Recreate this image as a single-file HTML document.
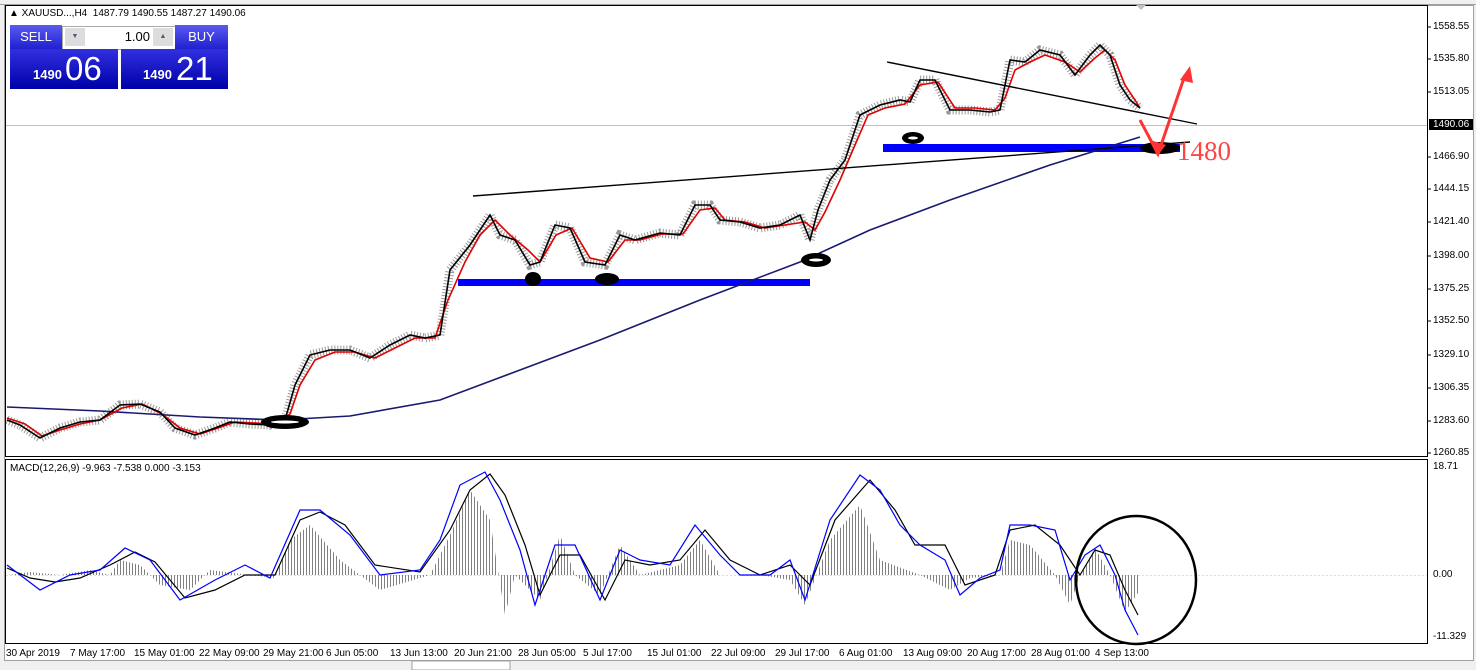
<!DOCTYPE html>
<html><head><meta charset="utf-8"><style>
body{margin:0;width:1476px;height:670px;overflow:hidden;background:#f0f0f0;font-family:"Liberation Sans",sans-serif}
.ax{position:absolute;left:1433px;font-size:10px;color:#000}
.bt{position:absolute;top:648px;font-size:10px;color:#000;white-space:nowrap}
</style></head><body>
<div style="position:absolute;left:0;top:0;width:1476px;height:4px;background:#f0f0f0;border-bottom:1px solid #a0a0a0"></div>
<div style="position:absolute;left:4px;top:5px;width:1468px;height:654px;background:#fff;border:1px solid #a0a0a0"></div>
<svg width="1476" height="670" style="position:absolute;left:0;top:0">
<defs><pattern id="hp" width="3" height="10" patternUnits="userSpaceOnUse"><rect x="0" y="0" width="1" height="10" fill="#808080"/></pattern></defs>
<rect x="5.5" y="5.5" width="1422" height="451" fill="none" stroke="#000"/>
<rect x="5.5" y="459.5" width="1422" height="184" fill="none" stroke="#000"/>
<line x1="6" y1="125.5" x2="1427" y2="125.5" stroke="#c0c0c0"/>
<g stroke="#000">
<line x1="1427" y1="27" x2="1431" y2="27"/><line x1="1427" y1="59" x2="1431" y2="59"/><line x1="1427" y1="92" x2="1431" y2="92"/><line x1="1427" y1="157" x2="1431" y2="157"/><line x1="1427" y1="189" x2="1431" y2="189"/><line x1="1427" y1="222" x2="1431" y2="222"/><line x1="1427" y1="256" x2="1431" y2="256"/><line x1="1427" y1="289" x2="1431" y2="289"/><line x1="1427" y1="321" x2="1431" y2="321"/><line x1="1427" y1="355" x2="1431" y2="355"/><line x1="1427" y1="388" x2="1431" y2="388"/><line x1="1427" y1="421" x2="1431" y2="421"/><line x1="1427" y1="453" x2="1431" y2="453"/>
</g>
<rect x="458" y="279" width="352" height="7" fill="#0000ff"/>
<rect x="883" y="144" width="297" height="8" fill="#0000ff"/>
<polyline fill="none" stroke="#191970" stroke-width="1.6" points="7,407 100,411 200,417 280,420 350,416 440,400 520,370 600,340 700,300 800,262 870,230 950,200 1050,165 1140,137"/>
<polyline fill="none" stroke="#444" stroke-width="9" stroke-dasharray="1,2" opacity="0.55" points="7,420 20,425 40,438 60,428 80,422 100,420 120,405 140,404 160,412 175,428 195,435 215,428 230,422 250,424 270,425 285,420 295,385 310,355 330,350 350,350 370,358 390,345 410,335 425,338 440,335 450,270 470,245 490,215 500,235 515,240 530,265 540,262 555,225 570,228 585,262 605,265 620,235 635,240 660,233 680,235 695,205 710,205 720,220 740,222 760,228 780,225 800,215 810,240 818,210 830,180 845,160 860,115 880,105 900,100 910,102 920,80 935,80 950,110 970,110 990,112 1000,110 1010,60 1025,62 1040,50 1060,55 1075,75 1090,55 1100,45 1110,55 1120,85 1130,100 1140,108"/>
<polyline fill="none" stroke="#e00000" stroke-width="1.6" points="7,418 25,424 42,436 60,430 80,424 100,420 122,408 142,404 162,414 180,428 200,434 218,428 235,422 255,423 275,424 290,414 300,385 315,360 335,352 355,352 375,358 395,348 415,338 435,338 448,300 465,262 480,235 495,220 510,235 528,250 540,262 556,235 572,228 590,258 608,262 625,240 640,240 662,234 683,234 700,210 715,208 725,220 745,222 765,228 785,225 805,222 815,230 825,212 840,180 855,145 868,115 885,108 905,104 920,85 938,82 955,108 975,108 995,110 1005,98 1015,70 1030,62 1045,55 1065,62 1080,72 1095,58 1105,50 1115,60 1125,85 1135,100 1140,108"/>
<polyline fill="none" stroke="#000" stroke-width="1.6" points="7,420 20,425 40,438 60,428 80,422 100,420 120,405 140,404 160,412 175,428 195,435 215,428 230,422 250,424 270,425 285,420 295,385 310,355 330,350 350,350 370,358 390,345 410,335 425,338 440,335 450,270 470,245 490,215 500,235 515,240 530,265 540,262 555,225 570,228 585,262 605,265 620,235 635,240 660,233 680,235 695,205 710,205 720,220 740,222 760,228 780,225 800,215 810,240 818,210 830,180 845,160 860,115 880,105 900,100 910,102 920,80 935,80 950,110 970,110 990,112 1000,110 1010,60 1025,62 1040,50 1060,55 1075,75 1090,55 1100,45 1110,55 1120,85 1130,100 1140,108"/>
<g stroke="#000" stroke-width="1.4">
<line x1="473" y1="196" x2="1190" y2="142"/>
<line x1="887" y1="62" x2="1197" y2="124"/>
</g>
<g fill="#000">
<ellipse cx="285" cy="422" rx="24" ry="7"/><ellipse cx="533" cy="279" rx="8" ry="7"/><ellipse cx="607" cy="279" rx="12" ry="6"/><ellipse cx="816" cy="260" rx="15" ry="7"/><ellipse cx="913" cy="138" rx="11" ry="6"/><ellipse cx="1160" cy="148" rx="20" ry="6"/>
</g>
<g fill="#fff"><ellipse cx="285" cy="422" rx="14" ry="1.5"/><ellipse cx="816" cy="260" rx="7" ry="1.5"/><ellipse cx="913" cy="138" rx="5" ry="1.5"/></g>
<polyline fill="none" stroke="#ff3333" stroke-width="3" points="1140,120 1158,154 1185,75"/>
<polygon fill="#ff3333" points="1150,140 1166,145 1157,156"/>
<polygon fill="#ff3333" points="1180,80 1193,83 1190,66"/>
<text x="1177" y="160" font-family="Liberation Serif" font-size="27" fill="#ff4444">1480</text>
<line x1="6" y1="575.5" x2="1427" y2="575.5" stroke="#ddd" stroke-dasharray="2,2"/>
<polygon fill="url(#hp)" points="7,575 30,572 60,575 90,570 110,575 120,560 140,565 160,585 190,590 210,570 250,575 275,578 290,540 310,525 340,560 380,590 430,575 450,535 470,490 490,520 505,615 515,575 540,600 560,535 575,575 600,595 620,545 640,575 680,565 700,540 720,575 760,575 790,580 805,605 830,540 860,505 880,560 920,575 950,590 970,578 1000,575 1010,540 1030,545 1055,575 1070,605 1080,575 1095,548 1110,575 1125,612 1140,590 1140,575"/>
<polyline fill="none" stroke="#000" stroke-width="1.2" points="7,568 30,578 55,582 80,578 110,565 135,552 155,562 185,598 215,590 245,575 275,575 300,520 320,512 345,525 375,565 420,572 450,530 470,490 490,474 505,495 525,545 540,595 560,555 580,555 605,600 625,560 650,565 680,560 705,530 730,560 760,575 790,565 810,585 835,520 870,480 895,510 915,545 945,545 965,585 995,575 1010,530 1035,525 1060,545 1080,575 1095,550 1110,555 1125,590 1138,615"/>
<polyline fill="none" stroke="#0000ff" stroke-width="1.2" points="7,565 40,590 70,575 100,570 125,548 150,560 180,600 215,580 245,565 270,578 300,510 320,510 350,535 380,575 420,570 440,540 460,485 485,472 500,500 520,550 535,605 555,545 575,545 600,600 620,550 640,560 670,565 695,525 720,555 740,575 770,575 790,560 805,600 830,520 860,475 880,490 900,525 920,545 945,560 960,595 980,578 1000,570 1010,525 1030,525 1055,530 1070,580 1085,555 1100,545 1115,575 1125,610 1138,635"/>
<ellipse cx="1136" cy="580" rx="60" ry="64" fill="none" stroke="#000" stroke-width="2.5"/>
<rect x="412" y="661" width="98" height="9" fill="#fff" stroke="#a0a0a0"/>
<polygon points="1136,5 1146,5 1141,10" fill="#c0c0c0"/>
</svg>
<div style="position:absolute;left:9px;top:8px;font-size:10px">▲ XAUUSD...,H4&nbsp; 1487.79 1490.55 1487.27 1490.06</div>
<div style="position:absolute;left:10px;top:25px;width:52px;height:24px;background:linear-gradient(#5a5af0,#2020d0);color:#fff;font-size:13px;text-align:center;line-height:24px">SELL</div>
<div style="position:absolute;left:62px;top:26px;width:113px;height:22px;background:#fff;border:1px solid #aaa"></div>
<div style="position:absolute;left:65px;top:28px;width:20px;height:18px;background:#ddd;font-size:7px;text-align:center;line-height:18px;color:#557">▼</div>
<div style="position:absolute;left:90px;top:29px;width:60px;font-size:13px;text-align:right">1.00</div>
<div style="position:absolute;left:153px;top:28px;width:20px;height:18px;background:#ddd;font-size:7px;text-align:center;line-height:18px;color:#557">▲</div>
<div style="position:absolute;left:175px;top:25px;width:53px;height:24px;background:linear-gradient(#5a5af0,#2020d0);color:#fff;font-size:13px;text-align:center;line-height:24px">BUY</div>
<div style="position:absolute;left:10px;top:49px;width:108px;height:40px;background:linear-gradient(#3030e0,#0000a8);color:#fff"><span style="position:absolute;left:23px;top:18px;font-size:13px;font-weight:bold">1490</span><span style="position:absolute;left:55px;top:1px;font-size:33px">06</span></div>
<div style="position:absolute;left:121px;top:49px;width:107px;height:40px;background:linear-gradient(#3030e0,#0000a8);color:#fff"><span style="position:absolute;left:22px;top:18px;font-size:13px;font-weight:bold">1490</span><span style="position:absolute;left:55px;top:1px;font-size:33px">21</span></div>
<div style="position:absolute;left:10px;top:463px;font-size:10px">MACD(12,26,9) -9.963 -7.538 0.000 -3.153</div>
<div class="ax" style="top:21px">1558.55</div><div class="ax" style="top:53px">1535.80</div><div class="ax" style="top:86px">1513.05</div>
<div class="ax" style="top:119px;left:1429px;background:#000;color:#fff;padding:0 4px">1490.06</div>
<div class="ax" style="top:151px">1466.90</div><div class="ax" style="top:183px">1444.15</div><div class="ax" style="top:216px">1421.40</div><div class="ax" style="top:250px">1398.00</div><div class="ax" style="top:283px">1375.25</div><div class="ax" style="top:315px">1352.50</div><div class="ax" style="top:349px">1329.10</div><div class="ax" style="top:382px">1306.35</div><div class="ax" style="top:415px">1283.60</div><div class="ax" style="top:447px">1260.85</div>
<div class="ax" style="top:461px">18.71</div><div class="ax" style="top:569px">0.00</div><div class="ax" style="top:631px">-11.329</div>
<div class="bt" style="left:6px">30 Apr 2019</div><div class="bt" style="left:70px">7 May 17:00</div><div class="bt" style="left:134px">15 May 01:00</div><div class="bt" style="left:199px">22 May 09:00</div><div class="bt" style="left:263px">29 May 21:00</div><div class="bt" style="left:326px">6 Jun 05:00</div><div class="bt" style="left:390px">13 Jun 13:00</div><div class="bt" style="left:454px">20 Jun 21:00</div><div class="bt" style="left:518px">28 Jun 05:00</div><div class="bt" style="left:583px">5 Jul 17:00</div><div class="bt" style="left:647px">15 Jul 01:00</div><div class="bt" style="left:711px">22 Jul 09:00</div><div class="bt" style="left:775px">29 Jul 17:00</div><div class="bt" style="left:839px">6 Aug 01:00</div><div class="bt" style="left:903px">13 Aug 09:00</div><div class="bt" style="left:967px">20 Aug 17:00</div><div class="bt" style="left:1031px">28 Aug 01:00</div><div class="bt" style="left:1095px">4 Sep 13:00</div>
</body></html>
